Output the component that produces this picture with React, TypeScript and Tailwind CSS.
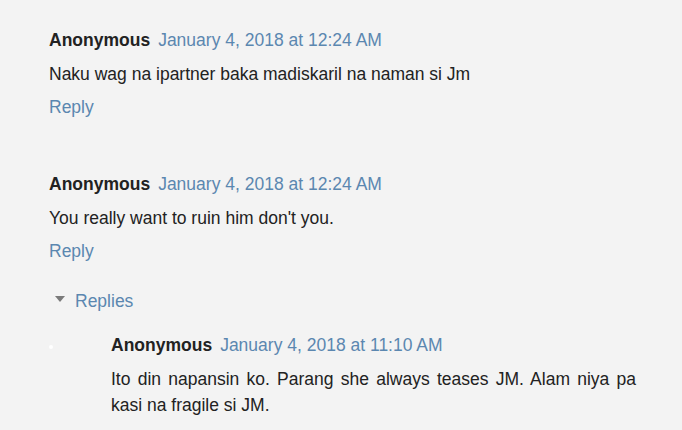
import React from "react";

const font = { fontFamily: '"Liberation Sans", Arial, sans-serif' };

function Comment({ date, body }: { date: string; body: React.ReactNode }) {
  return (
    <div className="flex flex-col">
      <div className="flex items-baseline gap-[8px] leading-[26px]">
        <span className="font-bold text-[#222]">Anonymous</span>
        <span className="text-[#5b87b0]">{date}</span>
      </div>
      <div className="mt-[8px] leading-[26px] text-[#222]">{body}</div>
      <div className="mt-[7px] leading-[26px] text-[#5b87b0]">Reply</div>
    </div>
  );
}

export default function App() {
  return (
    <div className="w-[682px] h-[430px] overflow-hidden bg-[#f3f3f3] text-[17.5px]" style={font}>
      <div className="pl-[49px] pt-[27px] flex flex-col">
        <Comment date="January 4, 2018 at 12:24 AM" body="Naku wag na ipartner baka madiskaril na naman si Jm" />
        <div className="h-[51px]" />
        <Comment date="January 4, 2018 at 12:24 AM" body="You really want to ruin him don't you." />
        <div className="mt-[24px] flex items-center leading-[26px] pl-[6px]">
          <svg width="10" height="6" viewBox="0 0 10 6" className="mr-[10px] -mt-[4px]">
            <polygon points="0,0 10,0 5,6" fill="#7a7a7a" />
          </svg>
          <span className="text-[#5b87b0]">Replies</span>
        </div>
        <div className="mt-[18px] flex">
          <div className="w-[62px] relative">
            <div className="absolute left-[0px] top-[13px] w-[4px] h-[4px] rounded-full bg-white" />
          </div>
          <div className="w-[525px]">
            <div className="flex items-baseline gap-[8px] leading-[26px]">
              <span className="font-bold text-[#222]">Anonymous</span>
              <span className="text-[#5b87b0]">January 4, 2018 at 11:10 AM</span>
            </div>
            <div className="mt-[8px] leading-[26px] text-[#222] text-justify">
              Ito din napansin ko. Parang she always teases JM. Alam niya pa kasi na fragile si JM.
            </div>
          </div>
        </div>
      </div>
    </div>
  );
}
